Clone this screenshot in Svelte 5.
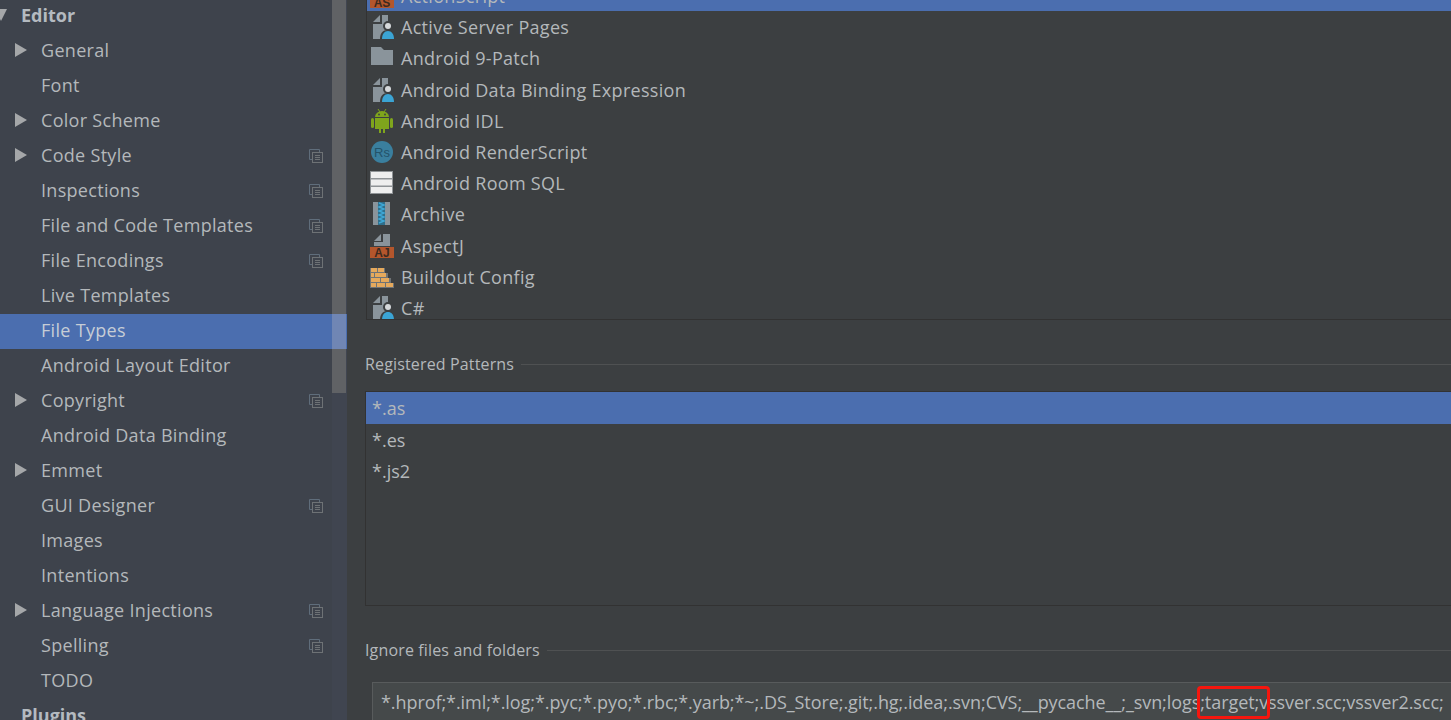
<script>
  const settings = [
    { name: 'General', arrow: true },
    { name: 'Font' },
    { name: 'Color Scheme', arrow: true },
    { name: 'Code Style', arrow: true, copy: true },
    { name: 'Inspections', copy: true },
    { name: 'File and Code Templates', copy: true },
    { name: 'File Encodings', copy: true },
    { name: 'Live Templates' },
    { name: 'File Types', selected: true },
    { name: 'Android Layout Editor' },
    { name: 'Copyright', arrow: true, copy: true },
    { name: 'Android Data Binding' },
    { name: 'Emmet', arrow: true },
    { name: 'GUI Designer', copy: true },
    { name: 'Images' },
    { name: 'Intentions' },
    { name: 'Language Injections', arrow: true, copy: true },
    { name: 'Spelling', copy: true },
    { name: 'TODO' }
  ];

  const fileTypes = [
    { name: 'ActionScript', icon: 'as', selected: true },
    { name: 'Active Server Pages', icon: 'user' },
    { name: 'Android 9-Patch', icon: 'folder' },
    { name: 'Android Data Binding Expression', icon: 'user' },
    { name: 'Android IDL', icon: 'android' },
    { name: 'Android RenderScript', icon: 'rs' },
    { name: 'Android Room SQL', icon: 'sql' },
    { name: 'Archive', icon: 'archive' },
    { name: 'AspectJ', icon: 'aj' },
    { name: 'Buildout Config', icon: 'bricks' },
    { name: 'C#', icon: 'user' }
  ];

  const patterns = ['*.as', '*.es', '*.js2'];
</script>

{#snippet typeIcon(kind)}
  <svg class="type-icon" width="25" height="24" viewBox="0 0 25 24">
    {#if kind === 'user'}
      <path d="M12 0h6v24H3V9h9z" fill="#8a949b" />
      <path d="M3 7l7-7v7z" fill="#8a949b" />
      <circle cx="18" cy="11" r="5" fill="#3c3f41" />
      <circle cx="18" cy="11" r="3" fill="#d5d8da" />
      <path d="M10 24h15c0-6-3-9-7.500-9S10 18 10 24z" fill="#3c3f41" />
      <path d="M12 24h12c0-5-2.500-8-6-8s-6 3-6 8z" fill="#3ba4d4" />
    {:else if kind === 'folder'}
      <path d="M1 1h10l3 3h9v15H1z" fill="#8a949b" />
    {:else if kind === 'android'}
      <rect x="1" y="9" width="3" height="10" rx="1.500" fill="#7fa51c" />
      <rect x="20" y="9" width="3" height="10" rx="1.500" fill="#7fa51c" />
      <path d="M5 8a7 6 0 0 1 14 0z" fill="#7fa51c" />
      <path d="M5 9h14v11h-4v4h-2v-4h-2v4H9v-4H5z" fill="#7fa51c" />
      <path d="M8 0l2 3M16 0l-2 3" stroke="#7fa51c" />
      <circle cx="9" cy="5.500" r=".9" fill="#3c3f41" />
      <circle cx="15" cy="5.500" r=".9" fill="#3c3f41" />
    {:else if kind === 'rs'}
      <circle cx="12" cy="12" r="11" fill="#3a7f9e" />
      <text x="12" y="16.500" class="icon-label rs-label" text-anchor="middle">Rs</text>
    {:else if kind === 'sql'}
      <rect x="0" y="0" width="23" height="23" fill="#8f9396" />
      <rect x="1" y="1" width="21" height="6" fill="#eeeeee" />
      <rect x="1" y="8.500" width="21" height="6" fill="#eeeeee" />
      <rect x="1" y="16" width="21" height="6" fill="#eeeeee" />
    {:else if kind === 'archive'}
      <rect x="3" y="0" width="17" height="23" fill="#8a949b" />
      <rect x="8" y="0" width="7" height="23" fill="#2f6f8c" />
      <path d="M9 1l5 2-5 2 5 2-5 2 5 2-5 2 5 2-5 2 5 2-5 2" fill="none" stroke="#3fa8d6" stroke-width="1.400" />
    {:else if kind === 'aj' || kind === 'as'}
      <path d="M13 0h7v12H4V8h9z" fill="#8a949b" />
      <path d="M4 7l7-7v7z" fill="#8a949b" />
      <rect x="0" y="13" width="24" height="11" fill="#b4562c" />
      <text x="12" y="23" class="icon-label badge-label" text-anchor="middle">{kind === 'aj' ? 'AJ' : 'AS'}</text>
    {:else if kind === 'bricks'}
      <path d="M0 3h15v5h3v5h3v5h3v5H0z" fill="#6f7376" />
      <rect x="1" y="3" width="6" height="4" fill="#e5a95c" />
      <rect x="8" y="3" width="6" height="4" fill="#e5a95c" />
      <rect x="1" y="8" width="3" height="4" fill="#e5a95c" />
      <rect x="5" y="8" width="11" height="4" fill="#e5a95c" />
      <rect x="1" y="13" width="9" height="4" fill="#e5a95c" />
      <rect x="11" y="13" width="8" height="4" fill="#e5a95c" />
      <rect x="1" y="18" width="5" height="4" fill="#e5a95c" />
      <rect x="7" y="18" width="8" height="4" fill="#e5a95c" />
      <rect x="16" y="18" width="7" height="4" fill="#e5a95c" />
    {/if}
  </svg>
{/snippet}

{#snippet copyIcon()}
  <svg class="copy-icon" width="14" height="14" viewBox="0 0 14 14" fill="none">
    <path d="M10.500 3.500V.5H.5v10h3" stroke="#5f6d7b" />
    <rect x="3.500" y="3.500" width="10" height="10" stroke="#6e7275" />
    <path d="M6 6.500h5M6 8.500h5M6 10.500h5" stroke="#6e7275" />
  </svg>
{/snippet}

<div class="window">
  <aside class="sidebar">
    <div class="scrollbar"><div class="thumb"></div></div>
    <div class="tree">
      <div class="row group"><span class="twist open"></span>Editor</div>
      {#each settings as item}
        <div class="row item" class:selected={item.selected}>
          {#if item.arrow}<span class="twist"></span>{/if}
          <span class="label">{item.name}</span>
          {#if item.copy}{@render copyIcon()}{/if}
        </div>
      {/each}
      <div class="row group plugins">Plugins</div>
    </div>
  </aside>

  <main class="content">
    <div class="type-list">
      {#each fileTypes as type}
        <div class="type-row" class:selected={type.selected}>
          {@render typeIcon(type.icon)}
          <span>{type.name}</span>
        </div>
      {/each}
    </div>

    <div class="section-title patterns-title"><span>Registered Patterns</span><i></i></div>
    <div class="pattern-list">
      {#each patterns as pattern, i}
        <div class="pattern" class:selected={i === 0}>{pattern}</div>
      {/each}
    </div>

    <div class="section-title ignore-title"><span>Ignore files and folders</span><i></i></div>
    <div class="ignore-input">
      <span class="ignore-text">*.hprof;*.iml;*.log;*.pyc;*.pyo;*.rbc;*.yarb;*~;.DS_Store;.git;.hg;.idea;.svn;CVS;__pycache__;_svn;logs;<span class="marked">target;<b class="mark"></b></span>vssver.scc;vssver2.scc;</span>
    </div>
  </main>
</div>

<style>
  :global(body) {
    margin: 0;
    background: #3c3f41;
  }
  .window {
    display: flex;
    width: 1451px;
    height: 720px;
    overflow: hidden;
    font-family: "Open Sans", "Noto Sans", sans-serif;
    font-size: 18px;
    color: #b4b8bb;
  }

  /* left settings tree */
  .sidebar {
    position: relative;
    flex: 0 0 347px;
    height: 720px;
    overflow: hidden;
    background: #3e434c;
  }
  .tree {
    position: relative;
    margin-top: -1px;
    width: 347px;
  }
  .row {
    display: flex;
    align-items: center;
    box-sizing: border-box;
    height: 35px;
    padding-bottom: 3px;
    position: relative;
    white-space: nowrap;
  }
  .group {
    padding-left: 21px;
    font-weight: 700;
    color: #b4bac0;
  }
  .item {
    padding-left: 41px;
    padding-right: 15px;
    letter-spacing: .3px;
  }
  .item .label {
    flex: 1;
  }
  .item.selected {
    background: #4b6eaf;
    color: #c6cdd6;
  }
  /* scrollbar thumb showing through the selection */
  .item.selected::after {
    content: "";
    position: absolute;
    top: 0;
    bottom: 0;
    right: 1px;
    width: 14px;
    background: #7086b4;
  }
  .twist {
    position: absolute;
    left: 15px;
    top: 9px;
    width: 0;
    height: 0;
    border-top: 7px solid transparent;
    border-bottom: 7px solid transparent;
    border-left: 12px solid #a5a7a9;
  }
  .twist.open {
    left: -5px;
    top: 10px;
    border-left: 6.500px solid transparent;
    border-right: 6.500px solid transparent;
    border-top: 12px solid #a5a7a9;
    border-bottom: 0;
  }
  .copy-icon {
    margin-right: 9px;
    margin-top: 2px;
  }
  .scrollbar {
    position: absolute;
    top: 0;
    right: 0;
    bottom: 0;
    width: 15px;
    background: #404550;
  }
  .thumb {
    width: 14px;
    height: 393px;
    background: #606265;
  }

  /* right panel */
  .content {
    flex: 1;
    min-width: 0;
    background: #3c3f41;
  }
  .type-list {
    height: 319px;
    margin-left: 19px;
    border-left: 1px solid #323232;
    border-bottom: 1px solid #323232;
    overflow: hidden;
  }
  .type-row {
    display: flex;
    align-items: center;
    gap: 6px;
    box-sizing: border-box;
    height: 31.200px;
    padding-top: 1px;
    padding-left: 3px;
    letter-spacing: .3px;
    white-space: nowrap;
  }
  .type-row:first-child {
    margin-top: -20px;
    padding-top: 0;
  }
  .type-row.selected {
    background: #4b6eaf;
  }
  .type-icon {
    flex: none;
  }
  .icon-label {
    font-family: "Liberation Sans", sans-serif;
    letter-spacing: 0;
  }
  .rs-label {
    font-size: 13px;
    fill: #24536a;
  }
  .badge-label {
    font-size: 12px;
    font-weight: 700;
    fill: #3c2a20;
  }

  .section-title {
    display: flex;
    align-items: center;
    gap: 7px;
    margin-left: 18px;
    font-size: 16px;
    height: 24px;
    letter-spacing: .15px;
  }
  .section-title i {
    flex: 1;
    height: 1px;
    background: #4f5152;
  }
  .patterns-title {
    margin-top: 32px;
  }
  .pattern-list {
    height: 213px;
    margin: 15px 0 0 18px;
    border: 1px solid #323232;
    border-right: 0;
  }
  .pattern {
    height: 31.500px;
    line-height: 33px;
    padding-left: 6px;
  }
  .pattern.selected {
    background: #4b6eaf;
  }
  .ignore-title {
    margin-top: 32px;
  }
  .ignore-input {
    height: 37px;
    line-height: 39px;
    margin: 20px 0 0 25px;
    padding-left: 8px;
    background: #45494a;
    border: 1px solid #585b5c;
    border-right: 0;
    letter-spacing: -.07px;
    white-space: nowrap;
  }
  .marked {
    position: relative;
  }
  .mark {
    position: absolute;
    left: -8px;
    right: -11px;
    top: -4px;
    bottom: -5px;
    border: 3.500px solid #f5160e;
    border-radius: 4px;
  }
</style>
